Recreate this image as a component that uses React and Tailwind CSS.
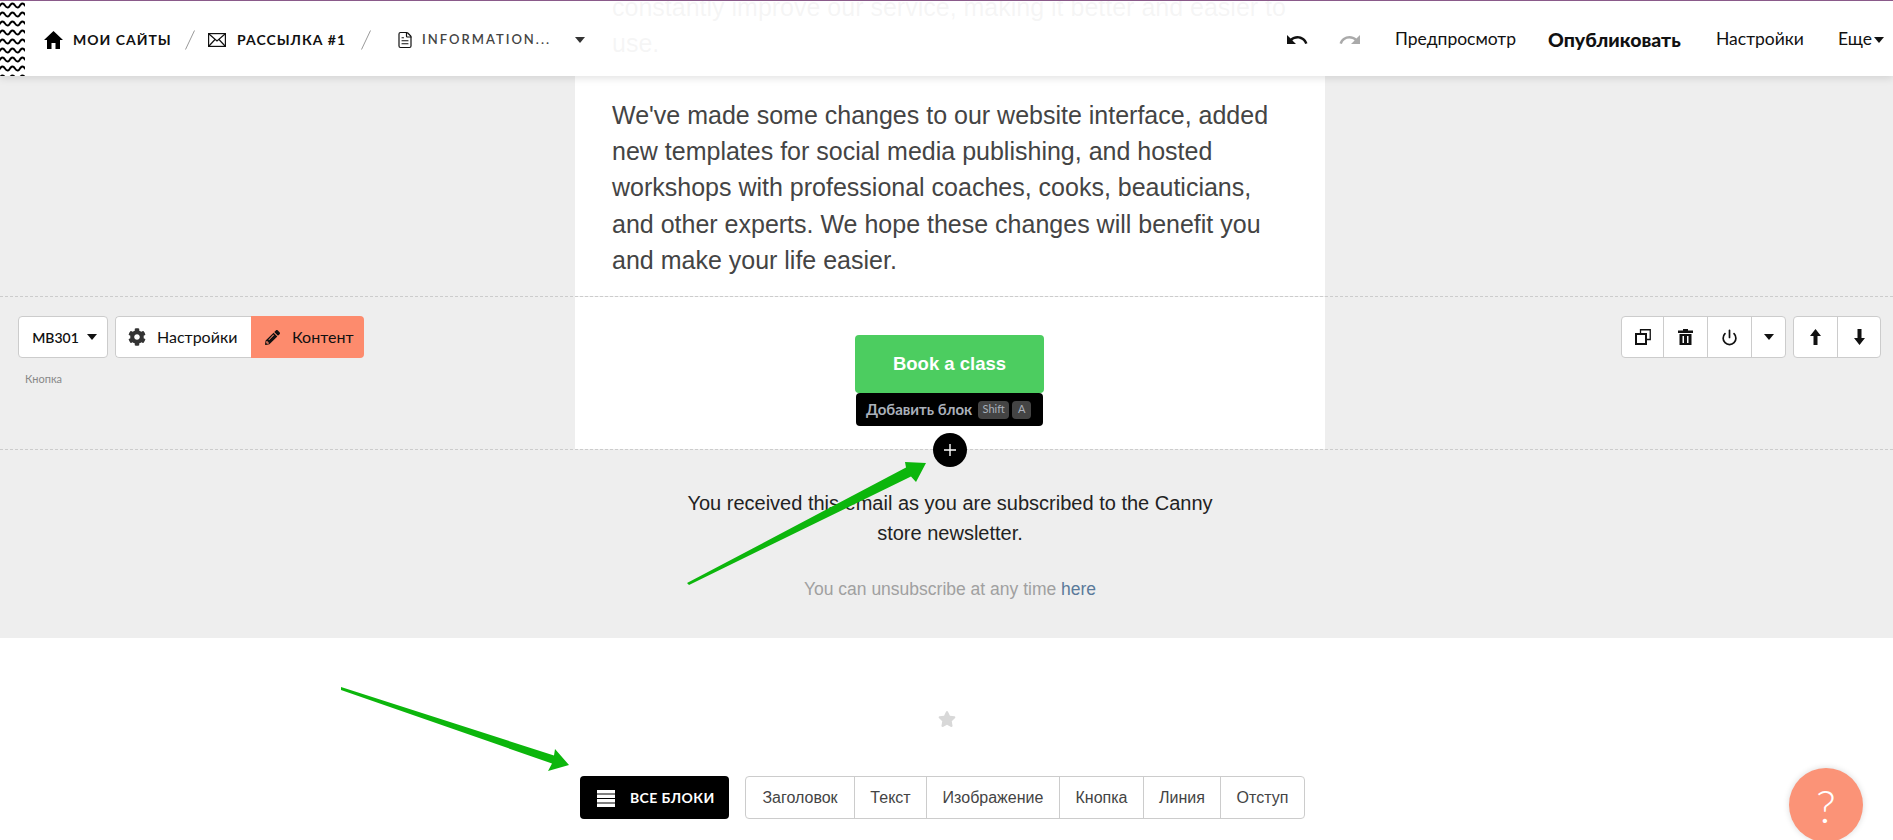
import { FaCog, FaPencilAlt, FaStar } from "react-icons/fa";
import { MdUndo, MdRedo } from "react-icons/md";
import { Power, FileText } from "lucide-react";

const futura = "font-['Lato','Noto_Sans',sans-serif]";

function Caret({ className = "" }) {
  return (
    <svg width="10" height="6" viewBox="0 0 10 6" className={className}>
      <path d="M0 0h10L5 6z" fill="currentColor" />
    </svg>
  );
}

function Envelope() {
  return (
    <svg width="18" height="14" viewBox="0 0 18 14" fill="none" stroke="#111" strokeWidth="1.2">
      <rect x="0.6" y="0.6" width="16.8" height="12.8" />
      <path d="M1 1l8 7 8-7M1 13l6-6.5M17 13l-6-6.5" />
    </svg>
  );
}

function Home() {
  return (
    <svg width="19" height="18" viewBox="0 0 19 18" fill="#000">
      <path d="M9.500 0L19 9h-3v9h-4.500v-6h-4v6H3V9H0z" />
    </svg>
  );
}

function Waves() {
  return (
    <svg width="25" height="75" className="shrink-0">
      <defs>
        <pattern id="waves" width="10" height="9" patternUnits="userSpaceOnUse">
          <path d="M-2.500 6.500C0 6.500 0 2.500 2.500 2.500S5 6.500 7.500 6.500 10 2.500 12.500 2.500" fill="none" stroke="#000" strokeWidth="2" />
        </pattern>
      </defs>
      <rect width="25" height="75" fill="url(#waves)" />
    </svg>
  );
}

function Slash() {
  return (
    <svg width="10" height="20" viewBox="0 0 10 20" className="shrink-0">
      <path d="M9.500 0.500L0.500 19.500" stroke="#999" strokeWidth="1" />
    </svg>
  );
}

function CopyIcon() {
  return (
    <svg width="16" height="16" viewBox="0 0 16 16" fill="none" stroke="#111">
      <path d="M5.500 4.500V0.750h9.750V10.500H11.500" strokeWidth="1.3" />
      <rect x="1" y="5" width="10" height="10" strokeWidth="2" />
    </svg>
  );
}

function TrashIcon() {
  return (
    <svg width="15" height="16" viewBox="0 0 15 16" fill="#111">
      <path d="M5 0h5v1.500h5V4H0V1.500h5z" />
      <path d="M1.500 5h12v11h-12zM4.500 7v7h1.500V7zM9 7v7h1.500V7z" fillRule="evenodd" />
    </svg>
  );
}

function ArrowIcon({ down = false }) {
  return (
    <svg width="11" height="16" viewBox="0 0 11 16" fill="#111" className={down ? "rotate-180" : ""}>
      <path d="M5.500 0L11 7H7.500v9h-4V7H0z" />
    </svg>
  );
}

function TopBar() {
  return (
    <div className={`absolute top-0 left-0 right-0 h-[76px] flex items-center bg-white/95 border-t border-[#8a5a8a] shadow-[0_2px_8px_rgba(0,0,0,0.12)] ${futura}`}>
      <Waves />
      <div className="flex items-center pt-[2px] text-[14px] font-bold tracking-[1px] text-[#111] uppercase ml-[19px]">
        <Home />
        <span className="ml-[10px] w-[97px] whitespace-nowrap">Мои сайты</span>
        <span className="ml-[15px]"><Slash /></span>
        <span className="ml-[13px]"><Envelope /></span>
        <span className="ml-[11px] w-[108px] whitespace-nowrap">Рассылка #1</span>
        <span className="ml-[16px]"><Slash /></span>
        <FileText className="ml-[25px] w-[18px] h-[20px]" strokeWidth={1.6} />
        <span className="ml-[8px] w-[127px] whitespace-nowrap font-semibold text-[#444] tracking-[2px] text-[13px]">Information...</span>
        <Caret className="ml-[26px] text-[#333]" />
      </div>
      <div className="ml-auto flex items-center pt-[2px] text-[17.500px] text-[#111]">
        <MdUndo className="w-[24px] h-[24px]" />
        <MdRedo className="ml-[29px] w-[24px] h-[24px] text-[#aaa]" />
        <span className="ml-[33px] w-[121px] whitespace-nowrap">Предпросмотр</span>
        <span className="ml-[32px] w-[135px] whitespace-nowrap text-[19.500px] font-black">Опубликовать</span>
        <span className="ml-[33px] w-[88px] whitespace-nowrap">Настройки</span>
        <span className="ml-[34px] w-[30px] whitespace-nowrap">Еще</span>
        <Caret className="ml-[6px] mr-[9px]" />
      </div>
    </div>
  );
}

function LeftTools() {
  return (
    <div className={`pt-[19px] pl-[18px] ${futura}`}>
      <div className="flex gap-[7px] h-[42px] text-[#111]">
        <div className="w-[90px] flex items-center justify-center gap-[8px] pl-[3px] bg-white border border-[#ccc] rounded text-[14px] font-semibold">
          MB301 <Caret />
        </div>
        <div className="flex rounded overflow-hidden">
          <div className="w-[136px] flex items-center pl-[12px] bg-white border border-r-0 border-[#ccc] rounded-l text-[16px]">
            <FaCog className="w-[18px] h-[18px] text-[#333]" />
            <span className="ml-[11px]">Настройки</span>
          </div>
          <div className="w-[113px] flex items-center pl-[14px] bg-[#fd8b6d] text-[16px]">
            <FaPencilAlt className="w-[15px] h-[15px]" />
            <span className="ml-[12px]">Контент</span>
          </div>
        </div>
      </div>
      <div className="mt-[14px] ml-[7px] text-[11px] leading-[14px] text-[#888]">Кнопка</div>
    </div>
  );
}

function RightTools() {
  const cell = "flex items-center justify-center border-l border-[#ccc] first:border-l-0";
  return (
    <div className="pt-[19px] pr-[12px] flex justify-end gap-[7px] text-[#111]">
      <div className="flex h-[42px] bg-white border border-[#ccc] rounded">
        <div className={`${cell} w-[41px]`}><CopyIcon /></div>
        <div className={`${cell} w-[44px]`}><TrashIcon /></div>
        <div className={`${cell} w-[44px]`}><Power className="w-[17px] h-[17px]" strokeWidth={2.4} /></div>
        <div className={`${cell} w-[34px]`}><Caret /></div>
      </div>
      <div className="flex h-[42px] bg-white border border-[#ccc] rounded">
        <div className={`${cell} w-[43px]`}><ArrowIcon /></div>
        <div className={`${cell} w-[43px]`}><ArrowIcon down /></div>
      </div>
    </div>
  );
}

function AddBlock() {
  return (
    <>
      <div className={`absolute left-[856px] top-[393px] w-[187px] h-[33px] flex items-center pl-[10px] bg-black rounded text-[15px] font-bold text-[#aab0ba] ${futura}`}>
        <span className="whitespace-nowrap">Добавить блок</span>
        <span className="ml-[6px] w-[31px] h-[18px] flex items-center justify-center bg-[#444] rounded-sm text-[11px] font-normal">Shift</span>
        <span className="ml-[3px] w-[19px] h-[18px] flex items-center justify-center bg-[#444] rounded-sm text-[11px] font-normal">A</span>
      </div>
      <div className="absolute left-[933px] top-[433px] w-[34px] h-[34px] flex items-center justify-center bg-black rounded-full">
        <svg width="14" height="14" viewBox="0 0 14 14">
          <path d="M7 1v12M1 7h12" stroke="#fff" strokeWidth="1.4" />
        </svg>
      </div>
    </>
  );
}

function Arrows() {
  return (
    <svg className="absolute inset-0 pointer-events-none" width="1893" height="840">
      <path d="M687 583L906 467.500 905 462 926 463 916 482 911 476.500 689 585z" fill="#0cb60c" />
      <path d="M341 687L554 755.500 555 749 569 765 548 771 552 763.500 341 690z" fill="#0cb60c" />
    </svg>
  );
}

const blocks = [
  ["Заголовок", "w-[108px]"],
  ["Текст", "w-[72px]"],
  ["Изображение", "w-[133px]"],
  ["Кнопка", "w-[84px]"],
  ["Линия", "w-[77px]"],
  ["Отступ", "w-[84px]"],
];

export default function App() {
  return (
    <div className="relative h-[840px] overflow-hidden bg-white font-['Liberation_Sans',Arial,sans-serif]">
      {/* email text, scrolled under the top bar */}
      <div className="h-[297px] bg-[#eeeeee] border-b border-dashed border-[#ccc] pl-[575px]">
        <div className="w-[750px] h-[296px] bg-white pl-[37px] pr-[38px] pb-[18px] flex flex-col justify-end gap-[36px] text-[25px] leading-[36.200px] text-[#444] overflow-hidden">
          <p className="shrink-0">constantly improve our service, making it better and easier to use.</p>
          <p className="shrink-0">We've made some changes to our website interface, added new templates for social media publishing, and hosted workshops with professional coaches, cooks, beauticians, and other experts. We hope these changes will benefit you and make your life easier.</p>
        </div>
      </div>

      {/* button block with its tools */}
      <div className="h-[153px] bg-[#eeeeee] border-b border-dashed border-[#ccc] grid grid-cols-[575px_750px_1fr]">
        <LeftTools />
        <div className="bg-white flex justify-center pt-[38px] pr-px">
          <div className="w-[189px] h-[58px] flex items-center justify-center bg-[#4ccd60] rounded text-[18.500px] font-bold text-white">Book a class</div>
        </div>
        <RightTools />
      </div>

      {/* email footer */}
      <div className="h-[188px] bg-[#eeeeee] pl-[575px]">
        <div className="w-[750px] flex flex-col items-center pt-[38px] text-center">
          <p className="w-[540px] text-[20px] leading-[30px] text-[#222]">You received this email as you are subscribed to the Canny store newsletter.</p>
          <p className="mt-[26px] text-[17.500px] leading-[30px] text-[#a0a0a0]">You can unsubscribe at any time <span className="text-[#5b7a9a]">here</span></p>
        </div>
      </div>

      {/* add block bar */}
      <div className="pl-[580px] pt-[72px]">
        <FaStar className="w-[18px] h-[18px] text-[#d8d8d8] ml-[358px]" />
        <div className="mt-[48px] flex gap-[16px]">
          <div className={`w-[149px] h-[43px] flex items-center pl-[17px] bg-black rounded text-white text-[14px] font-bold tracking-[0.4px] ${futura}`}>
            <svg width="18" height="18" viewBox="0 0 18 18" fill="#fff">
              <rect y="1" width="18" height="3.500" />
              <rect y="5.500" width="18" height="3.500" />
              <rect y="10" width="18" height="3.500" />
              <rect y="14.500" width="18" height="3.500" />
            </svg>
            <span className="ml-[15px]">ВСЕ БЛОКИ</span>
          </div>
          <div className="flex h-[43px] border border-[#ccc] rounded">
            {blocks.map(([label, width]) => (
              <div key={label} className={`${width} flex items-center justify-center border-l border-[#ccc] first:border-l-0 text-[16px] text-[#444]`}>{label}</div>
            ))}
          </div>
        </div>
      </div>

      <AddBlock />
      <Arrows />
      <TopBar />

      <div className="absolute left-[1789px] top-[768px] w-[74px] h-[74px] flex items-center justify-center rounded-full bg-[#fb9377] shadow-[0_0_6px_rgba(0,0,0,0.15)] text-[46px] font-light text-white font-['Lato',sans-serif]">?</div>
    </div>
  );
}
